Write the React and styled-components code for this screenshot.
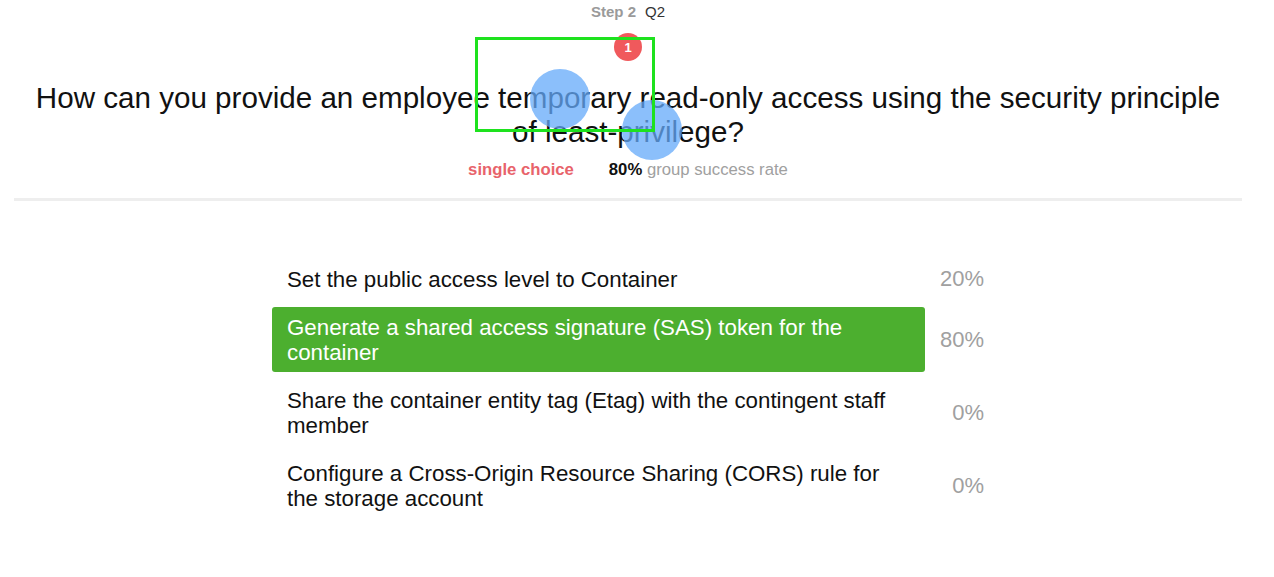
import React from 'react';
import styled, { createGlobalStyle } from 'styled-components';

const GlobalStyle = createGlobalStyle`
	html, body {
		margin: 0;
		padding: 0;
		background: #ffffff;
	}
	body {
		font-family: 'Liberation Sans', Arial, sans-serif;
		color: #111;
	}
`;

const Page = styled.div`
	position: relative;
	width: 1228px;
	height: 577px;
	margin-left: 14px;
	overflow: hidden;
`;

const Header = styled.div`
	display: flex;
	flex-direction: column;
	align-items: center;
	padding-top: 4px;
`;

const StepLine = styled.div`
	display: flex;
	gap: 9px;
	font-size: 15px;
	line-height: 16px;
`;

const Step = styled.span`
	font-weight: 700;
	color: #9a9a9a;
`;

const QNum = styled.span`
	color: #333;
`;

const Title = styled.h1`
	margin: 61px 0 0;
	font-size: 29.6px;
	font-weight: 400;
	line-height: 34px;
	text-align: center;
	color: #111;
`;

const Meta = styled.div`
	display: flex;
	gap: 35px;
	margin-top: 11px;
	font-size: 16.7px;
	line-height: 20px;
`;

const Kind = styled.span`
	font-weight: 700;
	color: #e8636b;
`;

const Rate = styled.span`
	color: #a0a0a0;
	b {
		color: #111;
		font-weight: 700;
	}
`;

const Divider = styled.hr`
	margin: 18px 0 0;
	border: none;
	height: 3px;
	background: #eeeeee;
`;

const Options = styled.div`
	width: 712px;
	margin: 58px auto 0;
	display: flex;
	flex-direction: column;
	gap: 8px;
`;

const Row = styled.div`
	display: flex;
	align-items: center;
`;

const Answer = styled.div`
	flex: 0 0 653px;
	box-sizing: border-box;
	padding: 8px 15px 7px;
	font-size: 22.3px;
	line-height: 25px;
	border-radius: 3px;
	background: ${p => (p.$correct ? '#4caf2f' : 'transparent')};
	color: ${p => (p.$correct ? '#ffffff' : '#111')};
`;

const Percent = styled.div`
	flex: 1;
	text-align: right;
	font-size: 22px;
	color: #a0a0a0;
`;

const Badge = styled.div`
	position: absolute;
	left: 600px;
	top: 33px;
	width: 28px;
	height: 28px;
	border-radius: 50%;
	background: #f0595c;
	color: #fff;
	font-size: 13px;
	font-weight: 700;
	display: flex;
	align-items: center;
	justify-content: center;
`;

const Click = styled.div`
	position: absolute;
	width: 60px;
	height: 60px;
	border-radius: 50%;
	background: rgba(100, 170, 250, 0.75);
	left: ${p => p.$x - 30}px;
	top: ${p => p.$y - 30}px;
`;

const Frame = styled.div`
	position: absolute;
	left: 461px;
	top: 37px;
	width: 180px;
	height: 95px;
	box-sizing: border-box;
	border: 3px solid #1ee21e;
`;

const answers = [
	{ text: 'Set the public access level to Container', pct: '20%' },
	{ text: 'Generate a shared access signature (SAS) token for the container', pct: '80%', correct: true },
	{ text: 'Share the container entity tag (Etag) with the contingent staff member', pct: '0%' },
	{ text: 'Configure a Cross-Origin Resource Sharing (CORS) rule for the storage account', pct: '0%' },
];

const App = () => {
	return (
		<>
			<GlobalStyle />
			<Page>
				<Header>
					<StepLine>
						<Step>Step 2</Step>
						<QNum>Q2</QNum>
					</StepLine>
					<Title>
						How can you provide an employee temporary read-only access using the security principle
						<br />
						of least-privilege?
					</Title>
					<Meta>
						<Kind>single choice</Kind>
						<Rate>
							<b>80%</b> group success rate
						</Rate>
					</Meta>
				</Header>
				<Divider />
				<Options>
					{answers.map(a => (
						<Row key={a.text}>
							<Answer $correct={a.correct}>{a.text}</Answer>
							<Percent>{a.pct}</Percent>
						</Row>
					))}
				</Options>
				<Badge>1</Badge>
				<Click $x={546} $y={99} />
				<Click $x={638} $y={130} />
				<Frame />
			</Page>
		</>
	);
};

export default App;
